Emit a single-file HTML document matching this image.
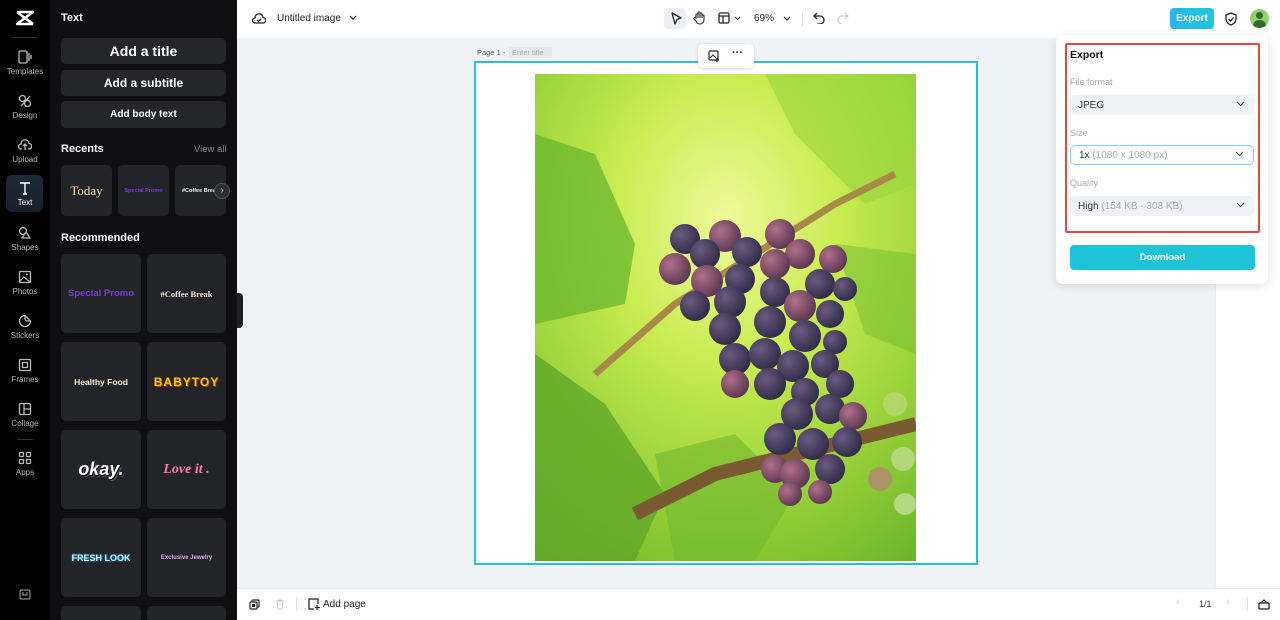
<!DOCTYPE html>
<html style="overflow:hidden;height:620px"><head><meta charset="utf-8"><style>
*{box-sizing:border-box;margin:0;padding:0}
html,body{width:1280px;height:620px;overflow:hidden}
body{font-family:"Liberation Sans",sans-serif;background:#f0f3f6;position:relative}
.a{position:absolute}
.nav{left:0;top:0;width:50px;height:620px;background:#000}
.ni{position:absolute;left:0;width:50px;text-align:center;color:#bbb;font-size:8px}
.ni svg{display:block;margin:0 auto 3px}
.panel{left:50px;top:0;width:187px;height:620px;background:#0f0f11;overflow:hidden}
.btn{position:absolute;left:11px;width:165px;background:#25262a;border-radius:5px;color:#fff;font-weight:bold;text-align:center}
.card{position:absolute;background:#232428;border-radius:5px;display:flex;align-items:center;justify-content:center;font-weight:bold}
.top{left:237px;top:0;width:1043px;height:38px;background:#fff}
.bot{left:237px;top:588px;width:1043px;height:32px;background:#fff;border-top:1px solid #e8ebee}
.fld{position:absolute;left:5px;width:184px;height:20px;background:#f0f2f5;border-radius:5px;font-size:10px;color:#333;padding:5px 8px}
.lbl{position:absolute;left:5px;font-size:9px;color:#aaa}
.chev{position:absolute;right:9px;top:6px}
</style></head><body>
<div class="a nav">
  <svg class="a" style="left:15px;top:10px" width="20" height="16" viewBox="0 0 20 16"><path d="M2 2h16L2 14h16M2 2l16 12" stroke="#fff" stroke-width="2.4" fill="none" stroke-linejoin="round"/></svg>
  <div class="a" style="left:13px;top:37px;width:24px;height:1px;background:#333"></div>
  <div class="ni" style="top:50px"><svg width="14" height="14" viewBox="0 0 14 14"><rect x="1" y="1" width="8" height="12" rx="1.5" stroke="#bbb" fill="none" stroke-width="1.3"/><path d="M11 3v8M13 5v4" stroke="#bbb" stroke-width="1.3"/></svg>Templates</div>
  <div class="ni" style="top:94px"><svg width="14" height="14" viewBox="0 0 14 14"><circle cx="4.5" cy="4.5" r="3" stroke="#bbb" fill="none" stroke-width="1.3"/><circle cx="9.5" cy="9.5" r="3" stroke="#bbb" fill="none" stroke-width="1.3"/><path d="M3 12L12 2" stroke="#bbb" stroke-width="1.3"/></svg>Design</div>
  <div class="ni" style="top:138px"><svg width="14" height="14" viewBox="0 0 14 14"><path d="M4 11H3a2.5 2.5 0 010-5 4 4 0 018-0.5A2.5 2.5 0 0111 11h-1M7 12V6M5 8l2-2 2 2" stroke="#bbb" fill="none" stroke-width="1.3"/></svg>Upload</div>
  <div class="a" style="left:6px;top:175px;width:37px;height:37px;border-radius:6px;background:linear-gradient(#1c2a38,#16202a)"></div>
  <div class="ni" style="top:181px;color:#fff"><svg width="14" height="14" viewBox="0 0 14 14"><path d="M2 2h10M7 2v11M5 13h4" stroke="#fff" fill="none" stroke-width="1.4"/></svg>Text</div>
  <div class="ni" style="top:226px"><svg width="14" height="14" viewBox="0 0 14 14"><circle cx="5" cy="5" r="3.5" stroke="#bbb" fill="none" stroke-width="1.3"/><path d="M8 6l4 6H4z" stroke="#bbb" fill="none" stroke-width="1.3"/></svg>Shapes</div>
  <div class="ni" style="top:270px"><svg width="14" height="14" viewBox="0 0 14 14"><rect x="1.5" y="1.5" width="11" height="11" rx="1" stroke="#bbb" fill="none" stroke-width="1.3"/><path d="M2 11l4-4 6 5" stroke="#bbb" fill="none" stroke-width="1.2"/><circle cx="9" cy="4.5" r="1" fill="#bbb"/></svg>Photos</div>
  <div class="ni" style="top:314px"><svg width="14" height="14" viewBox="0 0 14 14"><path d="M7 1.5a5.5 5.5 0 105.5 5.5L7 1.5zM7 1.5v3a2.5 2.5 0 002.5 2.5h3" stroke="#bbb" fill="none" stroke-width="1.3"/></svg>Stickers</div>
  <div class="ni" style="top:358px"><svg width="14" height="14" viewBox="0 0 14 14"><rect x="1.5" y="1.5" width="11" height="11" rx="1" stroke="#bbb" fill="none" stroke-width="1.3"/><rect x="4.5" y="4.5" width="5" height="5" stroke="#bbb" fill="none" stroke-width="1.3"/></svg>Frames</div>
  <div class="ni" style="top:402px"><svg width="14" height="14" viewBox="0 0 14 14"><rect x="1.5" y="1.5" width="11" height="11" rx="1.5" stroke="#bbb" fill="none" stroke-width="1.3"/><path d="M6 1.5v11M6 7h6.5" stroke="#bbb" stroke-width="1.3"/></svg>Collage</div>
  <div class="a" style="left:17px;top:439px;width:16px;height:1px;background:#333"></div>
  <div class="ni" style="top:451px"><svg width="14" height="14" viewBox="0 0 14 14"><rect x="1.5" y="1.5" width="4" height="4" rx="1" stroke="#bbb" fill="none" stroke-width="1.3"/><rect x="8.5" y="1.5" width="4" height="4" rx="1" stroke="#bbb" fill="none" stroke-width="1.3"/><rect x="1.5" y="8.5" width="4" height="4" rx="1" stroke="#bbb" fill="none" stroke-width="1.3"/><rect x="8.5" y="8.5" width="4" height="4" rx="1" stroke="#bbb" fill="none" stroke-width="1.3"/></svg>Apps</div>
  <svg class="a" style="left:19px;top:589px" width="12" height="11" viewBox="0 0 12 11"><rect x="1" y="1" width="10" height="9" rx="1.5" stroke="#aaa" fill="none"/><path d="M4 3v3h4V3" stroke="#aaa" fill="none"/></svg>
</div>
<div class="a panel">
  <div class="a" style="left:11px;top:12px;color:#fff;font-weight:bold;font-size:11px">Text</div>
  <div class="btn" style="top:38px;height:26px;line-height:26px;font-size:14px">Add a title</div>
  <div class="btn" style="top:70px;height:26px;line-height:26px;font-size:12px">Add a subtitle</div>
  <div class="btn" style="top:101px;height:27px;line-height:27px;font-size:10px">Add body text</div>
  <div class="a" style="left:11px;top:143px;color:#fff;font-weight:bold;font-size:11px">Recents</div>
  <div class="a" style="left:144px;top:144px;color:#888;font-size:9.5px">View all</div>
  <div class="card" style="left:11px;top:165px;width:51px;height:51px;color:#f2e6a8;font-family:'Liberation Serif',serif;font-size:13px;font-weight:normal">Today</div>
  <div class="card" style="left:68px;top:165px;width:51px;height:51px;color:#7a3bd8;font-size:5.5px">Special Promo</div>
  <div class="card" style="left:125px;top:165px;width:51px;height:51px;color:#eee;font-size:5.5px;justify-content:flex-start;padding-left:7px;overflow:hidden;white-space:nowrap">#Coffee Brea</div>
  <div class="a" style="left:164px;top:183px;width:16px;height:16px;border-radius:50%;background:#2d2e33;border:1px solid #555;color:#ccc;font-size:10px;text-align:center;line-height:13px">›</div>
  <div class="a" style="left:11px;top:232px;color:#fff;font-weight:bold;font-size:11px">Recommended</div>
  <div class="card" style="left:11px;top:254px;width:80px;height:79px;color:#7a3bd8;font-size:9.5px">Special Promo</div>
  <div class="card" style="left:97px;top:254px;width:79px;height:79px;color:#f3e6d8;font-size:8.5px;font-family:'Liberation Serif',serif">#Coffee Break</div>
  <div class="card" style="left:11px;top:342px;width:80px;height:79px;color:#f4efc8;font-size:8.5px">Healthy Food</div>
  <div class="card" style="left:97px;top:342px;width:79px;height:79px;color:#f6c411;font-size:12px;letter-spacing:1px;text-shadow:1px 1px 0 #a0460a">BABYTOY</div>
  <div class="card" style="left:11px;top:430px;width:80px;height:79px;color:#fff;font-size:18px;font-style:italic;text-shadow:1px 1px 0 #000,2px 2px 0 #555">okay.</div>
  <div class="card" style="left:97px;top:430px;width:79px;height:79px;color:#ff7ab0;font-size:14px;font-style:italic;font-family:'Liberation Serif',serif">Love it .</div>
  <div class="card" style="left:11px;top:518px;width:80px;height:79px;color:#bff1ff;font-size:9px;text-shadow:0 0 2px #29b3e0">FRESH LOOK</div>
  <div class="card" style="left:97px;top:518px;width:79px;height:79px;color:#e3a8ee;font-size:6px">Exclusive Jewelry</div>
  <div class="card" style="left:11px;top:606px;width:80px;height:14px;border-radius:5px 5px 0 0"></div>
  <div class="card" style="left:97px;top:606px;width:79px;height:14px;border-radius:5px 5px 0 0"></div>
</div>
<div class="a" style="left:237px;top:293px;width:6px;height:35px;background:#1e1f22;border-radius:0 4px 4px 0"></div>
<div class="a top">
  <svg class="a" style="left:15px;top:12px" width="14" height="13" viewBox="0 0 14 13"><path d="M4 11H3a2.5 2.5 0 010-5 4 4 0 018-.5A2.5 2.5 0 0111 11H4zM5 8l1.5 1.5L9 7" stroke="#222" fill="none" stroke-width="1.3"/></svg>
  <div class="a" style="left:40px;top:13px;font-size:10px;color:#222">Untitled image</div>
  <svg class="a" style="left:112px;top:15px" width="8" height="6"><path d="M1 1l3 3 3-3" stroke="#222" fill="none" stroke-width="1.2"/></svg>
  <div class="a" style="left:427px;top:8px;width:22px;height:21px;border-radius:4px;background:#eceef1"></div>
  <svg class="a" style="left:433px;top:12px" width="12" height="13"><path d="M2 1l9 5-4 1.5L5 12z" stroke="#222" fill="none" stroke-width="1.3" stroke-linejoin="round"/></svg>
  <svg class="a" style="left:456px;top:11px" width="12" height="14"><path d="M3 8V4a1 1 0 012 0v3-5a1 1 0 012 0v5-4a1 1 0 012 0v4-2a1 1 0 012 0v4a4 4 0 01-4 4H7a4 4 0 01-4-3L1 8a1 1 0 012-1z" stroke="#222" fill="none" stroke-width="1.1"/></svg>
  <svg class="a" style="left:481px;top:12px" width="12" height="12"><rect x="1" y="1" width="10" height="10" rx="1.5" stroke="#222" fill="none" stroke-width="1.3"/><path d="M1 4h10M5 4v7" stroke="#222" stroke-width="1.3"/></svg>
  <svg class="a" style="left:497px;top:16px" width="7" height="5"><path d="M1 1l2.5 2.5L6 1" stroke="#222" fill="none" stroke-width="1.1"/></svg>
  <div class="a" style="left:517px;top:13px;font-size:10px;color:#222">69%</div>
  <svg class="a" style="left:546px;top:16px" width="8" height="5"><path d="M1 1l3 3 3-3" stroke="#222" fill="none" stroke-width="1.2"/></svg>
  <div class="a" style="left:565px;top:12px;width:1px;height:14px;background:#ddd"></div>
  <svg class="a" style="left:576px;top:12px" width="12" height="12"><path d="M4 1L1 4l3 3M1 4h6a4 4 0 010 8H4" stroke="#222" fill="none" stroke-width="1.3"/></svg>
  <svg class="a" style="left:600px;top:12px" width="12" height="12"><path d="M8 1l3 3-3 3M11 4H5a4 4 0 000 8" stroke="#ccc" fill="none" stroke-width="1.2"/></svg>
  <div class="a" style="left:933px;top:8px;width:44px;height:21px;border-radius:4px;background:linear-gradient(90deg,#2bb3f0,#1ec9d9);color:#fff;font-size:10px;font-weight:bold;text-align:center;line-height:21px">Export</div>
  <svg class="a" style="left:988px;top:12px" width="12" height="14"><path d="M6 1l5 2v4c0 3-2.5 5-5 6-2.5-1-5-3-5-6V3z M3.5 7l2 2 3-3.5" stroke="#222" fill="none" stroke-width="1.3"/></svg>
  <div class="a" style="left:1013px;top:9px;width:19px;height:19px;border-radius:50%;background:#8fd16a;overflow:hidden"><div class="a" style="left:6px;top:3px;width:7px;height:7px;border-radius:50%;background:#2f6b31"></div><div class="a" style="left:3px;top:11px;width:13px;height:10px;border-radius:6px 6px 0 0;background:#2f6b31"></div></div>
</div>
<div class="a" style="left:1215px;top:38px;width:65px;height:550px;background:#fff;border-left:1px solid #e8ecef"></div>
<div class="a" style="left:477px;top:48px;font-size:7.5px;color:#555">Page 1 -</div>
<div class="a" style="left:509px;top:47px;width:43px;height:11px;background:#e6e9ec;font-size:7.5px;color:#aaa;padding:1px 3px">Enter title</div>
<div class="a" style="left:474px;top:61px;width:504px;height:504px;background:#fff;border:2px solid #22c3d6"></div>
<div class="a" style="left:698px;top:44px;width:56px;height:24px;background:#fff;border-radius:5px;box-shadow:0 1px 4px rgba(0,0,0,.15)">
  <svg class="a" style="left:10px;top:6px" width="12" height="12"><rect x="1" y="1" width="9" height="9" rx="1" stroke="#222" fill="none" stroke-width="1.2"/><path d="M2 8l3-3 3 3" stroke="#222" fill="none"/><path d="M9 8v4M7 10h4" stroke="#222" stroke-width="1.2"/></svg>
  <div class="a" style="left:34px;top:3px;font-size:11px;font-weight:bold;color:#222">···</div>
</div>
<svg class="a" style="left:535px;top:74px" width="381" height="487" viewBox="0 0 381 487">
  <defs>
    <radialGradient id="bg" cx="0.5" cy="0.3" r="0.85"><stop offset="0" stop-color="#f0fa9a"/><stop offset="0.35" stop-color="#c8ec50"/><stop offset="0.75" stop-color="#8fcc36"/><stop offset="1" stop-color="#6db52a"/></radialGradient>
    <radialGradient id="g" cx="0.35" cy="0.35" r="0.7"><stop offset="0" stop-color="#6b5a80"/><stop offset="1" stop-color="#2e2a45"/></radialGradient>
    <radialGradient id="gr" cx="0.35" cy="0.35" r="0.7"><stop offset="0" stop-color="#b0708a"/><stop offset="1" stop-color="#5a3550"/></radialGradient>
  </defs>
  <rect width="381" height="487" fill="url(#bg)"/>
  <path d="M0 60L60 80L100 170L90 230L0 250z" fill="#6ab52e" opacity=".75"/>
  <path d="M0 280L70 330L130 420L100 487H0z" fill="#5fa828" opacity=".8"/>
  <path d="M120 380L200 360L260 420L220 487H140z" fill="#72b82e" opacity=".6"/>
  <path d="M230 0H381V110L330 130L260 60z" fill="#9ad43e" opacity=".6"/>
  <path d="M300 170L381 180V280L330 260z" fill="#7cc234" opacity=".6"/>
  <path d="M60 300L140 230L300 130L360 100" stroke="#a88a48" stroke-width="7" fill="none"/>
  <path d="M100 440L180 400L260 380L381 350" stroke="#7a5a30" stroke-width="14" fill="none"/>
  <g>
    <circle cx="150" cy="165" r="15" fill="url(#g)"/><circle cx="190" cy="162" r="16" fill="url(#gr)"/><circle cx="245" cy="160" r="15" fill="url(#gr)"/>
    <circle cx="140" cy="195" r="16" fill="url(#gr)"/><circle cx="170" cy="180" r="15" fill="url(#g)"/><circle cx="212" cy="178" r="15" fill="url(#g)"/><circle cx="265" cy="180" r="15" fill="url(#gr)"/><circle cx="298" cy="185" r="14" fill="url(#gr)"/>
    <circle cx="172" cy="207" r="16" fill="url(#gr)"/><circle cx="205" cy="205" r="15" fill="url(#g)"/><circle cx="240" cy="190" r="15" fill="url(#gr)"/><circle cx="285" cy="210" r="15" fill="url(#g)"/><circle cx="310" cy="215" r="12" fill="url(#g)"/>
    <circle cx="160" cy="232" r="15" fill="url(#g)"/><circle cx="195" cy="228" r="16" fill="url(#g)"/><circle cx="240" cy="218" r="15" fill="url(#g)"/><circle cx="265" cy="232" r="16" fill="url(#gr)"/><circle cx="295" cy="240" r="14" fill="url(#g)"/>
    <circle cx="190" cy="255" r="16" fill="url(#g)"/><circle cx="235" cy="248" r="16" fill="url(#g)"/><circle cx="270" cy="262" r="16" fill="url(#g)"/><circle cx="300" cy="268" r="12" fill="url(#g)"/>
    <circle cx="200" cy="285" r="16" fill="url(#g)"/><circle cx="230" cy="280" r="16" fill="url(#g)"/><circle cx="258" cy="292" r="16" fill="url(#g)"/><circle cx="290" cy="290" r="14" fill="url(#g)"/>
    <circle cx="200" cy="310" r="14" fill="url(#gr)"/><circle cx="235" cy="310" r="16" fill="url(#g)"/><circle cx="270" cy="318" r="14" fill="url(#g)"/><circle cx="305" cy="310" r="14" fill="url(#g)"/>
    <circle cx="262" cy="340" r="16" fill="url(#g)"/><circle cx="295" cy="335" r="15" fill="url(#g)"/><circle cx="318" cy="342" r="14" fill="url(#gr)"/>
    <circle cx="245" cy="365" r="16" fill="url(#g)"/><circle cx="278" cy="370" r="16" fill="url(#g)"/><circle cx="312" cy="368" r="15" fill="url(#g)"/>
    <circle cx="240" cy="395" r="14" fill="url(#gr)"/><circle cx="260" cy="400" r="15" fill="url(#gr)"/><circle cx="295" cy="395" r="15" fill="url(#g)"/>
    <circle cx="255" cy="420" r="12" fill="url(#gr)"/><circle cx="285" cy="418" r="12" fill="url(#gr)"/>
  </g>
  <circle cx="360" cy="330" r="12" fill="#b4d870" opacity=".85"/><circle cx="345" cy="405" r="12" fill="#b08a6e" opacity=".85"/><circle cx="368" cy="385" r="12" fill="#bcd888" opacity=".85"/><circle cx="370" cy="430" r="11" fill="#c0dc90" opacity=".85"/>
</svg>
<div class="a bot">
  <svg class="a" style="left:12px;top:10px" width="11" height="11"><rect x="3" y="1" width="7" height="7" rx="1" stroke="#222" fill="none" stroke-width="1.2"/><rect x="1" y="3" width="7" height="7" rx="1" stroke="#222" fill="#fff" stroke-width="1.2"/><rect x="3" y="5" width="3" height="3" fill="#222"/></svg>
  <svg class="a" style="left:38px;top:10px" width="10" height="11"><path d="M1 2h8M3 2V1h4v1M2 2l1 8h4l1-8" stroke="#ccc" fill="none"/></svg>
  <div class="a" style="left:59px;top:8px;width:1px;height:14px;background:#e2e2e2"></div>
  <svg class="a" style="left:71px;top:9px" width="12" height="12"><path d="M6 1H1v10h5M1 1h9v5" stroke="#222" fill="none" stroke-width="1.3"/><path d="M9 7v5M7 9.5h5" stroke="#222" stroke-width="1.3"/></svg>
  <div class="a" style="left:86px;top:10px;font-size:10px;color:#222">Add page</div>
  <div class="a" style="left:939px;top:7px;font-size:11px;color:#ccc">‹</div>
  <div class="a" style="left:962px;top:10px;font-size:9px;color:#333">1/1</div>
  <div class="a" style="left:989px;top:7px;font-size:11px;color:#ccc">›</div>
  <div class="a" style="left:1010px;top:8px;width:1px;height:14px;background:#e2e2e2"></div>
  <svg class="a" style="left:1021px;top:9px" width="12" height="12"><rect x="1" y="5" width="10" height="6" rx="1" stroke="#222" fill="none" stroke-width="1.3"/><path d="M3 5l3-3 3 3" stroke="#222" fill="none" stroke-width="1.2"/></svg>
</div>
<div class="a" style="left:1056px;top:35px;width:212px;height:249px;background:#fff;border-radius:7px;box-shadow:0 2px 10px rgba(0,0,0,.12)">
  <div class="a" style="left:9px;top:8px;width:195px;height:190px;border:2px solid #e94545;border-radius:2px"></div>
  <div class="a" style="left:14px;top:14px;font-size:10.5px;font-weight:bold;color:#111">Export</div>
  <div style="position:absolute;left:9px;top:0;width:195px;height:240px">
    <div class="lbl" style="top:42px">File format</div>
    <div class="fld" style="top:60px">JPEG<svg class="chev" width="9" height="6"><path d="M1 1l3.5 3.5L8 1" stroke="#444" fill="none" stroke-width="1.1"/></svg></div>
    <div class="lbl" style="top:93px">Size</div>
    <div class="fld" style="top:110px;background:#fff;border:1.5px solid #7ed8e6;padding:4px 8px">1x <span style="color:#aaa">(1080 x 1080 px)</span><svg class="chev" width="9" height="6" style="top:5px"><path d="M1 1l3.5 3.5L8 1" stroke="#444" fill="none" stroke-width="1.1"/></svg></div>
    <div class="lbl" style="top:143px">Quality</div>
    <div class="fld" style="top:161px">High <span style="color:#aaa">(154 KB - 308 KB)</span><svg class="chev" width="9" height="6"><path d="M1 1l3.5 3.5L8 1" stroke="#444" fill="none" stroke-width="1.1"/></svg></div>
  </div>
  <div class="a" style="left:14px;top:210px;width:185px;height:25px;background:#1fc3d8;border-radius:4px;color:#fff;font-size:9.5px;font-weight:bold;text-align:center;line-height:25px">Download</div>
</div>
</body></html>
